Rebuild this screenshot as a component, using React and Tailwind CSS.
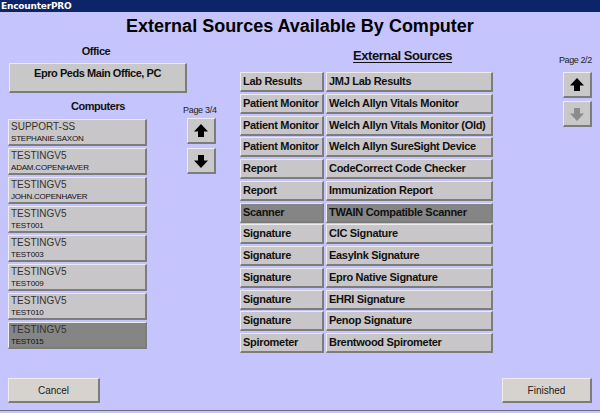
import React from 'react';

const computers = [
  ['SUPPORT-SS', 'STEPHANIE.SAXON'],
  ['TESTINGV5', 'ADAM.COPENHAVER'],
  ['TESTINGV5', 'JOHN.COPENHAVER'],
  ['TESTINGV5', 'TEST001'],
  ['TESTINGV5', 'TEST003'],
  ['TESTINGV5', 'TEST009'],
  ['TESTINGV5', 'TEST010'],
  ['TESTINGV5', 'TEST015'],
];

const sources = [
  ['Lab Results', 'JMJ Lab Results'],
  ['Patient Monitor', 'Welch Allyn Vitals Monitor'],
  ['Patient Monitor', 'Welch Allyn Vitals Monitor (Old)'],
  ['Patient Monitor', 'Welch Allyn SureSight Device'],
  ['Report', 'CodeCorrect Code Checker'],
  ['Report', 'Immunization Report'],
  ['Scanner', 'TWAIN Compatible Scanner'],
  ['Signature', 'CIC Signature'],
  ['Signature', 'EasyInk Signature'],
  ['Signature', 'Epro Native Signature'],
  ['Signature', 'EHRI Signature'],
  ['Signature', 'Penop Signature'],
  ['Spirometer', 'Brentwood Spirometer'],
];

const bevel = 'border-t border-l border-t-[#ececec] border-l-[#ececec] border-b-2 border-r-2 border-b-[#7c7c7c] border-r-[#7c7c7c]';

const Arrow = ({ down = false, color = '#000' }) => (
  <svg width="16" height="16" viewBox="0 0 16 16" style={{ transform: down ? 'rotate(180deg)' : undefined }}>
    <path d="M8 1 L15 8.5 L11 8.5 L11 14 L5 14 L5 8.5 L1 8.5 Z" fill={color} />
  </svg>
);

const ArrowButton = ({ down, disabled }) => (
  <div className={`w-[29px] h-[26px] bg-[#c8c8c8] flex items-center justify-center ${bevel}`}>
    <Arrow down={down} color={disabled ? '#8c8c8c' : '#000'} />
  </div>
);

const tight = { letterSpacing: '-0.45px' };

export default function App() {
  return (
    <div className="w-[600px] h-[413px] bg-[#c6c4fc] flex flex-col overflow-hidden" style={{ fontFamily: '"Liberation Sans", Arial, sans-serif' }}>
      {/* title bar */}
      <div className="h-[12px] bg-[#0c2468] flex items-center pl-[1px]">
        <span className="text-white text-[9px] font-bold leading-none" style={{ fontFamily: '"DejaVu Sans", sans-serif', letterSpacing: '-0.2px' }}>EncounterPRO</span>
      </div>

      <div className="text-center text-[18px] font-bold text-black leading-none mt-[5px]">External Sources Available By Computer</div>

      <div className="flex flex-1 mt-[2px]">
        {/* left column */}
        <div className="w-[232px] flex flex-col">
          <div className="w-[192px] text-center text-[11px] font-bold text-[#111] mt-[9px] leading-none" style={tight}>Office</div>
          <div className={`ml-[9px] mt-[6px] w-[178px] h-[30px] bg-[#c8c8c8] text-[11px] font-bold text-center pt-[3px] leading-tight text-[#111] ${bevel}`} style={tight}>
            Epro Peds Main Office, PC
          </div>
          <div className="flex mt-[8px]">
            <div className="w-[178px] text-center text-[11px] font-bold text-[#111] leading-none ml-[9px]" style={tight}>Computers</div>
            <div className="text-[9px] text-[#222] leading-none mt-[5px] -ml-[4px]" style={{ letterSpacing: '-0.3px' }}>Page 3/4</div>
          </div>
          <div className="flex mt-[4px]">
            <div className="ml-[8px] w-[139px] flex flex-col gap-[2px]">
              {computers.map(([a, b], i) => (
                <div key={i} className={`h-[27px] flex flex-col pl-[2px] pt-[1px] ${bevel} ${i === 7 ? 'bg-[#858585]' : 'bg-[#c8c6c8]'}`}>
                  <span className="text-[10px] text-[#333] leading-[12px]">{a}</span>
                  <span className="text-[8px] text-[#111] leading-[11px]" style={{ letterSpacing: '-0.2px' }}>{b}</span>
                </div>
              ))}
            </div>
            <div className="ml-[40px] flex flex-col gap-[4px] mt-[-1px]">
              <ArrowButton />
              <ArrowButton down />
            </div>
          </div>
        </div>

        {/* external sources */}
        <div className="flex flex-col w-[254px] ml-[8px]">
          <div className="text-[13px] font-bold underline underline-offset-2 text-[#111] leading-none mt-[12px] ml-[113px] whitespace-nowrap" style={tight}>External Sources</div>
          <div className="flex flex-col gap-[1.75px] mt-[10px]">
            {sources.map(([t, n], i) => (
              <div key={i} className="flex gap-[2px]">
                <div className={`w-[84px] h-[20px] text-[11px] font-bold text-[#111] pl-[2px] pt-[3px] leading-none whitespace-nowrap ${bevel} ${i === 6 ? 'bg-[#858585]' : 'bg-[#c8c6c8]'}`} style={{ letterSpacing: '-0.3px' }}>{t}</div>
                <div className={`w-[167px] h-[20px] text-[11px] font-bold text-[#111] pl-[2px] pt-[3px] leading-none whitespace-nowrap ${bevel} ${i === 6 ? 'bg-[#858585]' : 'bg-[#c8c6c8]'}`} style={{ letterSpacing: '-0.3px' }}>{n}</div>
              </div>
            ))}
          </div>
        </div>

        {/* right pager */}
        <div className="flex flex-col items-start ml-[69px]">
          <div className="text-[9px] text-[#222] leading-none mt-[19px] -ml-[4px]" style={{ letterSpacing: '-0.4px' }}>Page 2/2</div>
          <div className="flex flex-col gap-[3px] mt-[7px]">
            <ArrowButton />
            <ArrowButton down disabled />
          </div>
        </div>
      </div>

      {/* bottom buttons */}
      <div className="flex justify-between px-[8px] mb-[7px]">
        <div className={`w-[92px] h-[25px] bg-[#d6d3ce] text-[10px] text-[#222] flex items-center justify-center ${bevel}`}>Cancel</div>
        <div className={`w-[90px] h-[25px] bg-[#d6d3ce] text-[10px] text-[#222] flex items-center justify-center ${bevel}`}>Finished</div>
      </div>
      <div className="h-[1px] bg-[#6c6c80]" />
      <div className="h-[2px] bg-[#c6c4fc]" />
    </div>
  );
}
